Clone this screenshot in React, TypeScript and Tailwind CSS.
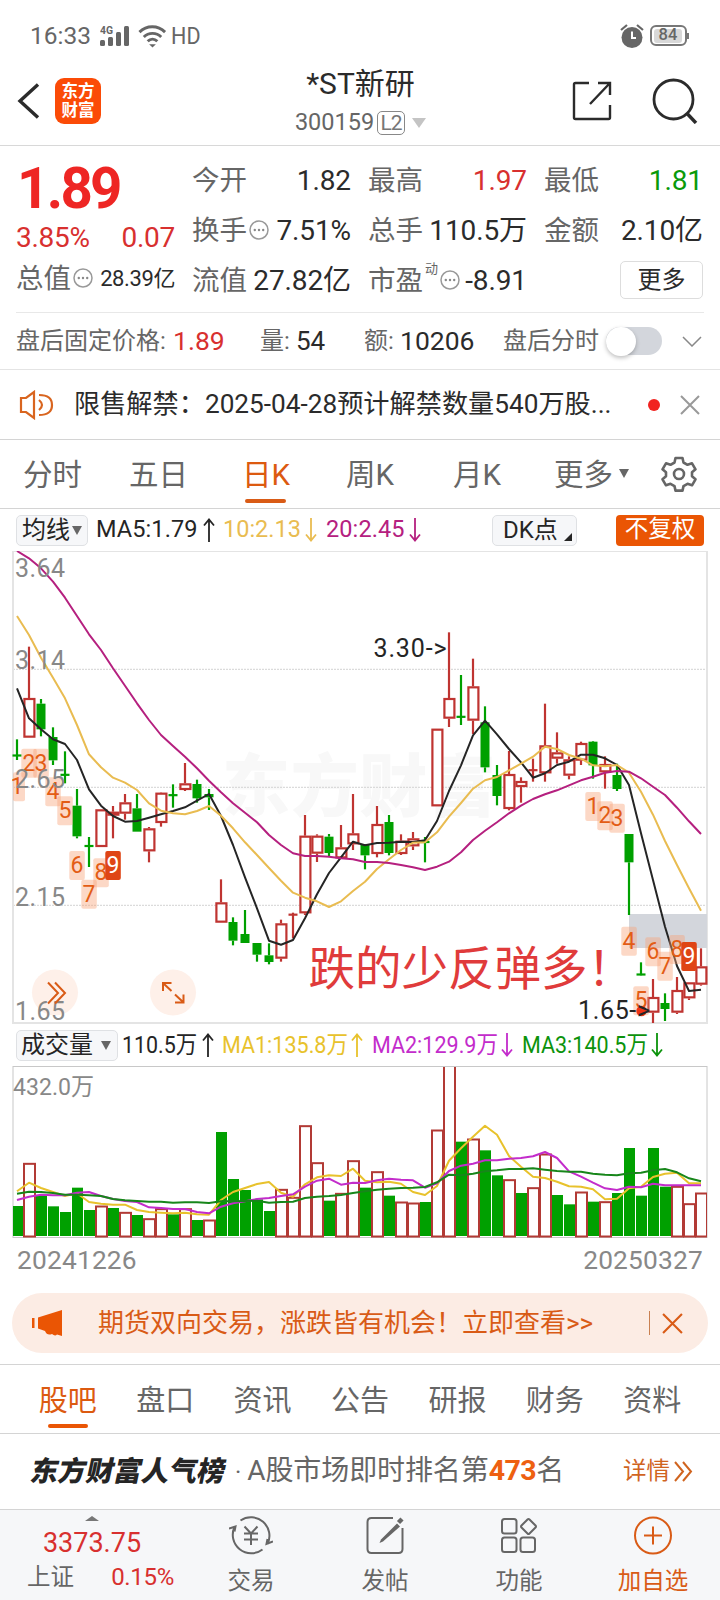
import type { ReactNode } from "react";
import clsx from "clsx";

type Candle = [up: 0 | 1, high: number, top: number, bottom: number, low: number];

// prices are stored in thirds of a pixel, measured from just above the plot
const candles: Candle[] = [
  [0, 583, 629, 634, 645], [1, 305, 459, 578, 578], [0, 462, 476, 553, 574], [0, 547, 576, 646, 660],
  [0, 619, 687, 692, 715], [0, 732, 782, 874, 880], [0, 876, 901, 905, 966], [1, 793, 793, 906, 906],
  [1, 783, 800, 812, 880], [1, 747, 772, 806, 824], [0, 747, 790, 860, 860], [1, 846, 850, 919, 952],
  [1, 742, 743, 834, 845], [0, 718, 748, 753, 788], [1, 654, 715, 735, 738], [0, 704, 717, 760, 773],
  [0, 732, 747, 757, 795], [1, 1003, 1072, 1133, 1133], [0, 1117, 1131, 1187, 1201], [0, 1095, 1167, 1194, 1194],
  [0, 1194, 1194, 1229, 1250], [0, 1195, 1231, 1251, 1258], [1, 1124, 1135, 1241, 1250], [1, 1103, 1107, 1111, 1180],
  [1, 810, 872, 1105, 1110], [1, 868, 872, 926, 951], [0, 867, 875, 924, 936], [1, 840, 907, 940, 940],
  [1, 747, 865, 898, 915], [0, 898, 898, 931, 973], [1, 783, 837, 927, 937], [0, 810, 831, 924, 931],
  [1, 868, 887, 927, 930], [1, 861, 880, 904, 915], [0, 876, 889, 893, 952], [1, 551, 551, 784, 784],
  [1, 262, 459, 521, 546], [0, 390, 513, 518, 540], [1, 341, 424, 527, 567], [0, 484, 532, 667, 682],
  [0, 660, 690, 753, 781], [1, 618, 687, 792, 796], [1, 697, 708, 726, 773], [1, 641, 673, 678, 710],
  [1, 476, 601, 685, 710], [1, 562, 622, 641, 656], [1, 634, 643, 692, 703], [1, 590, 594, 647, 660],
  [0, 588, 590, 661, 701], [1, 634, 657, 682, 731], [0, 656, 690, 732, 738], [0, 867, 867, 952, 1110],
  [0, 1252, 1286, 1291, 1291], [1, 1302, 1356, 1403, 1434], [0, 1345, 1374, 1392, 1428], [1, 1296, 1335, 1403, 1407],
  [1, 1312, 1312, 1360, 1365], [1, 1210, 1264, 1319, 1322],
];

const ma5 = [430, 520, 553, 583, 597, 645, 733, 782, 813, 830, 828, 818, 808, 798, 787, 767, 747, 813, 900, 997, 1090, 1187, 1199, 1185, 1120, 1048, 984, 937, 890, 901, 894, 893, 890, 891, 886, 828, 738, 661, 571, 527, 568, 612, 652, 698, 685, 660, 650, 629, 629, 640, 660, 720, 865, 1005, 1145, 1263, 1338, 1334];
const ma10 = [213, 270, 338, 398, 460, 540, 628, 667, 698, 713, 735, 775, 797, 805, 808, 798, 783, 812, 850, 892, 930, 969, 1007, 1043, 1058, 1069, 1086, 1069, 1038, 1010, 972, 943, 915, 893, 892, 862, 815, 774, 731, 706, 696, 676, 656, 635, 605, 612, 630, 641, 661, 664, 660, 683, 740, 809, 888, 960, 1030, 1097];
const ma20 = [18, 40, 70, 110, 158, 213, 268, 315, 370, 422, 475, 525, 570, 603, 635, 670, 707, 742, 775, 803, 832, 870, 900, 925, 933, 933, 935, 940, 943, 951, 951, 954, 960, 967, 975, 965, 950, 922, 885, 857, 832, 805, 782, 762, 748, 736, 721, 706, 695, 683, 678, 680, 700, 725, 750, 788, 829, 867];

const volumes = [558, 430, 526, 559, 576, 503, 570, 558, 564, 577, 585, 596, 566, 583, 566, 600, 600, 336, 477, 510, 538, 573, 508, 532, 317, 428, 542, 520, 422, 503, 455, 527, 546, 549, 546, 330, 100, 365, 357, 391, 466, 479, 519, 503, 402, 525, 553, 516, 545, 545, 519, 384, 527, 384, 500, 499, 551, 519];
const volumeUp = [1, 7, 9, 11, 12, 14, 16, 22, 23, 24, 25, 27, 28, 30, 32, 33, 35, 36, 38, 41, 43, 44, 47, 49, 55, 56, 57];
const vma1 = [514, 488, 504, 516, 528, 520, 546, 551, 554, 554, 570, 576, 578, 580, 578, 583, 584, 540, 516, 504, 492, 486, 518, 530, 493, 472, 466, 468, 446, 482, 487, 485, 491, 516, 525, 498, 422, 385, 350, 317, 344, 408, 440, 470, 474, 485, 499, 500, 508, 538, 536, 505, 500, 471, 461, 458, 490, 490];
const vma2 = [540, 530, 524, 526, 526, 518, 516, 528, 537, 543, 546, 562, 564, 567, 567, 576, 580, 560, 550, 544, 537, 534, 528, 523, 500, 482, 476, 494, 488, 489, 481, 476, 479, 481, 503, 490, 453, 437, 431, 421, 421, 416, 414, 409, 396, 414, 454, 470, 488, 505, 510, 500, 502, 491, 496, 496, 496, 496];
const vma3 = [521, 515, 516, 519, 524, 524, 526, 528, 537, 541, 543, 545, 545, 548, 547, 547, 549, 544, 544, 543, 542, 548, 546, 545, 534, 530, 528, 525, 519, 514, 509, 506, 504, 503, 501, 487, 464, 466, 461, 454, 451, 447, 447, 445, 449, 453, 455, 455, 461, 464, 466, 460, 458, 451, 447, 457, 475, 484];

// nine-turn marks: candle index, top, digit
const marks: [number, number, number][] = [
  [0, 682, 1], [1, 611, 2], [2, 611, 3], [3, 697, 4], [4, 754, 5], [5, 918, 6], [6, 1004, 7], [7, 940, 8], [8, 918, 9],
  [48, 741, 1], [49, 769, 2], [50, 776, 3], [51, 1145, 4], [52, 1324, 5], [53, 1177, 6], [54, 1220, 7], [55, 1170, 8], [56, 1191, 9],
];

const cx = (i: number) => 5 + i * 12;
const py = (v: number) => v / 3 - 6;
const vy = (v: number) => v / 3 - 46;
const line = (values: number[], y: (v: number) => number) =>
  values.map((v, i) => `${cx(i)},${y(v).toFixed(1)}`).join(" ");

const RED = "#bf3431";
const GREEN = "#00a000";

const KChart = () => (
  <svg width="696" height="474" viewBox="0 0 696 474" className="block" fontFamily='Roboto, "Noto Sans CJK SC", sans-serif'>
    <text x="210" y="260" fontSize="68" fontWeight="900" fill="#f8f8f8" textLength="274">东方财富</text>
    {[118.3, 236.3, 354.3].map((y) => (
      <line key={y} x1="1" x2="695" y1={y} y2={y} stroke="#d2d2d2" strokeDasharray="2 1" />
    ))}
    <rect x="1" y="0" width="694" height="472" fill="none" stroke="#e4e4e4" strokeWidth="2" />
    <rect x="617" y={py(1107)} width="78" height="34" fill="#d3d6dc" />
    <circle cx="43" cy="441.5" r="23" fill="#fef0e9" />
    <circle cx="161" cy="441.5" r="23" fill="#fef0e9" />
    {candles.map(([up, high, top, bottom, low], i) => {
      const x = cx(i);
      const color = up ? RED : GREEN;
      const thin = bottom - top < 7;
      return (
        <g key={i} stroke={color} strokeWidth="2.2">
          <line x1={x} x2={x} y1={py(high)} y2={thin ? py(low) : py(top)} />
          {!thin && <line x1={x} x2={x} y1={py(bottom)} y2={py(low)} />}
          {thin && <line x1={x - 4.5} x2={x + 4.5} y1={py((top + bottom) / 2)} y2={py((top + bottom) / 2)} />}
          {!thin && up === 0 && <rect x={x - 4.5} y={py(top)} width="9" height={(bottom - top) / 3} fill={GREEN} stroke="none" />}
          {!thin && up === 1 && (
            <rect x={x - 4.6} y={py(top) + 1} width="10" height={Math.max((bottom - top) / 3 - 2, 1)} fill="#fff" />
          )}
        </g>
      );
    })}
    <g fill="none" strokeWidth="2" strokeLinejoin="round">
      <polyline points={line(ma5, py)} stroke="#252525" />
      <polyline points={line(ma10, py)} stroke="#e9bc51" />
      <polyline points={line(ma20, py)} stroke="#b5207f" />
    </g>
    {marks.map(([i, top, n]) => {
      const left = i === 0 ? 1 : cx(i) - 7.7;
      return (
        <g key={i}>
          <rect x={left} y={py(top)} width={i === 0 ? 12 : 15.5} height="29" rx="2" fill={n === 9 ? "#df4515" : "#f9a378"} fillOpacity={n === 9 ? 1 : 0.42} />
          <text x={cx(i)} y={py(top) + 22} fontSize="23" textAnchor="middle" fill={n === 9 ? "#fff" : "#e35c15"}>{n}</text>
        </g>
      );
    })}
    <g fontSize="25" fill="#888" letterSpacing="0.4">
      <text x="3" y="25.5">3.64</text>
      <text x="3" y="117.5">3.14</text>
      <text x="3" y="236.5">2.65</text>
      <text x="3" y="354.5">2.15</text>
      <text x="3" y="468.5">1.65</text>
    </g>
    <circle cx="629.5" cy="460" r="5.2" fill="#ef3313" />
    <g fontSize="25" fill="#252525">
      <text x="361.5" y="106" textLength="73">3.30-&gt;</text>
      <text x="566" y="467.5" textLength="72">1.65-&gt;</text>
    </g>
    <text x="296.5" y="434" fontSize="46.5" fill="#e03b3b">跌的少反弹多！</text>
    <g fill="none" stroke="#d95b16" strokeWidth="2">
      <path d="M36 431.5l10 10.5-10 10.5M43 431.5l10 10.5-10 10.5" />
      <path d="M151 440v-8h8.5M151.500 432.500l8 7.500M171.500 443.500v8h-8.500M171 451l-8-7.500" />
    </g>
  </svg>
);

const VolumeChart = () => (
  <svg width="696" height="173" viewBox="0 0 696 173" className="block" fontFamily='Roboto, "Noto Sans CJK SC", sans-serif'>
    <rect x="1" y="0.5" width="694" height="171" fill="#fff" stroke="#c8c8c8" />
    <svg x="1" y="1" width="694" height="171" viewBox="1 1 694 171">
      {volumes.map((v, i) => {
        const x = cx(i);
        const y = vy(v);
        return volumeUp.includes(i) ? (
          <rect key={i} x={x - 5} y={y + 0.5} width="11" height={170 - y} fill="#fff" stroke="#b23a35" strokeWidth="2" />
        ) : (
          <rect key={i} x={x - 5} y={y} width="11" height={170 - y} fill={GREEN} />
        );
      })}
      <g fill="none" strokeWidth="2" strokeLinejoin="round">
        <polyline points={line(vma1, vy)} stroke="#e8c22c" />
        <polyline points={line(vma2, vy)} stroke="#c32ccb" />
        <polyline points={line(vma3, vy)} stroke="#17861a" />
      </g>
    </svg>
    <text x="1" y="28.5" fontSize="24" fill="#888" textLength="81" lengthAdjust="spacingAndGlyphs">432.0万</text>
  </svg>
);

const Arrow = ({ down = false }: { down?: boolean }) => (
  <svg width="12" height="24" viewBox="0 0 12 24" className="shrink-0" fill="none" stroke="currentColor" strokeWidth="1.8">
    <path d={down ? "M6 0v22.5M1 16.5l5 6 5-6" : "M6 24V1.5M1 7.5l5-6 5 6"} />
  </svg>
);

const Caret = ({ className }: { className?: string }) => (
  <svg width="10" height="9" viewBox="0 0 10 9" className={className} fill="currentColor"><path d="M0 0h10L5 9z" /></svg>
);

const Dots = () => (
  <svg width="20" height="20" viewBox="0 0 20 20" className="ml-[2px] -mt-[2px]">
    <circle cx="10" cy="10" r="9" fill="none" stroke="#999" strokeWidth="1.5" />
    <g fill="#888"><circle cx="5.8" cy="10" r="1.2" /><circle cx="10" cy="10" r="1.2" /><circle cx="14.2" cy="10" r="1.2" /></g>
  </svg>
);

const Cross = ({ className, size = 20 }: { className?: string; size?: number }) => (
  <svg width={size} height={size} viewBox="0 0 20 20" className={className} stroke="currentColor" strokeWidth="2"><path d="M1 1l18 18M19 1L1 19" /></svg>
);

interface CellProps {
  label: string;
  value?: string;
  color?: string;
  extra?: ReactNode;
}

const Cell = ({ label, value, color = "text-[#2b2b2b]", extra }: CellProps) => (
  <div className="flex h-[50px] items-center">
    <span className="-ml-[1px] text-[27.5px] text-[#666]">{label}</span>
    {extra}
    <span className={clsx("ml-auto text-[28px] tracking-[-0.1px]", color)}>{value}</span>
  </div>
);

const StatusBar = () => (
  <div className="flex h-[72px] items-center pt-[1px] pl-[30px] pr-[31px] text-[24.5px] text-[#666]">
    <span>16:33</span>
    <svg width="30" height="28" viewBox="0 0 30 28" className="ml-[9px] -mt-[5px]" fill="#666">
      <rect x="0" y="20" width="5" height="6" rx="1.5" /><rect x="8" y="17" width="5" height="9" rx="1.5" />
      <rect x="16" y="12" width="5" height="14" rx="1.5" /><rect x="24" y="6" width="5" height="20" rx="1.5" />
      <text x="0" y="14" fontSize="11" fontWeight="700" textLength="13" lengthAdjust="spacingAndGlyphs">4G</text>
    </svg>
    <svg width="29" height="24" viewBox="0 0 30 24" className="-mt-[1px] ml-[8px]" fill="none" stroke="#666" strokeWidth="3">
      <path d="M1.5 8C9 .5 20.5 .5 28 8M6 13c5-5 13-5 18 0M10 17.5c3-3 7-3 10 0" />
      <path d="M11.5 20.5h7L15 24z" fill="#666" stroke="none" />
    </svg>
    <span className="ml-[4px] w-[30px] origin-left scale-x-[0.88]">HD</span>
    <svg width="24" height="26" viewBox="0 0 24 26" className="-mt-[2px] ml-auto" fill="none" stroke="#666">
      <circle cx="12" cy="14.5" r="10.5" fill="#666" stroke="none" />
      <path d="M1 7l6-5M23 7l-6-5" strokeWidth="2.2" />
      <path d="M12 8.5v6.5h4" stroke="#fff" strokeWidth="2" />
    </svg>
    <div className="-mt-[2px] ml-[6px] flex h-[21px] w-[37px] items-center rounded-[6px] border-2 border-[#777] p-[2px]">
      <div className="flex h-[14px] w-[28px] items-center justify-center rounded-[3px] bg-[#d8d8d8] text-[16.5px] font-medium leading-none">84</div>
    </div>
    <div className="h-[6px] w-[2px] bg-[#777] -mt-[2px]" />
  </div>
);

const Header = () => (
  <div className="flex h-[74px] items-center border-b-[1.5px] border-[#d8d8d8] pl-[17px] pr-[22px]">
    <svg width="23" height="36" viewBox="0 0 23 36" className="mt-[-16px]" fill="none" stroke="#2b2b2b" strokeWidth="3.4"><path d="M21 1.5L3 18l18 16.5" /></svg>
    <div className="-mt-[16px] ml-[15px] flex h-[46px] w-[46px] flex-col items-center justify-center rounded-[9px] bg-[#fb4b07] text-[16.5px] font-bold leading-[19px] text-white">
      <span>东方</span>
      <span>财富</span>
    </div>
    <div className="-mt-[12px] ml-[152px] flex w-[215px] flex-col items-center">
      <span className="text-[30px] leading-[38px] text-[#2b2b2b] whitespace-nowrap">*ST新研</span>
      <div className="mt-[3px] flex h-[34px] items-center">
        <span className="text-[23.5px] text-[#666]">300159</span>
        <span className="ml-[3px] flex h-[24px] w-[28px] items-center justify-center rounded-[5px] border-[1.5px] border-[#888] text-[21px] tracking-[-1px] text-[#777]">L2</span>
        <svg width="14" height="10" viewBox="0 0 14 10" className="ml-[7px]"><path d="M0 0h14L7 10z" fill="#c4c4c4" /></svg>
      </div>
    </div>
    <svg width="40" height="40" viewBox="0 0 40 40" className="-mt-[16px] ml-auto" fill="none" stroke="#2b2b2b" strokeWidth="2.4">
      <path d="M17 2H3.5Q2 2 2 3.5v33Q2 38 3.5 38h33q1.5 0 1.5-1.5V24M26 2h12v12M38 2L18 23" />
    </svg>
    <svg width="46" height="46" viewBox="0 0 46 46" className="-mt-[16px] ml-[40px]" fill="none" stroke="#2b2b2b" strokeWidth="2.8">
      <circle cx="21.5" cy="21.5" r="19.5" /><path d="M35.5 36l8.5 9" strokeWidth="3.4" />
    </svg>
  </div>
);

const Quote = () => (
  <div className="grid h-[166px] grid-cols-4 gap-x-[18px] px-[17px] pt-[10px]">
    <div>
      <div className="flex h-[66px] items-center text-[56.5px] font-bold tracking-[-2.7px] text-[#ee2624]">1.89</div>
      <div className="-ml-[1px] flex h-[32px] items-center justify-between text-[28px] tracking-[-0.3px] text-[#d8302f]">
        <span>3.85%</span>
        <span>0.07</span>
      </div>
      <div className="flex h-[50px] items-center">
        <span className="-ml-[1px] text-[27.5px] text-[#666]">总值</span>
        <Dots />
        <span className="ml-auto text-[22px] tracking-[-0.4px] whitespace-nowrap text-[#2b2b2b]">28.39亿</span>
      </div>
    </div>
    <div>
      <Cell label="今开" value="1.82" />
      <Cell label="换手" value="7.51%" extra={<Dots />} />
      <Cell label="流值" value="27.82亿" />
    </div>
    <div>
      <Cell label="最高" value="1.97" color="text-[#d8302f]" />
      <Cell label="总手" value="110.5万" />
      <Cell label="市盈" value="-8.91" extra={<><span className="-mt-[26px] ml-[2px] text-[13px] text-[#666]">动</span><Dots /></>} />
    </div>
    <div>
      <Cell label="最低" value="1.81" color="text-[#0a9a0a]" />
      <Cell label="金额" value="2.10亿" />
      <div className="mt-[5px] ml-auto flex h-[38px] w-[83px] items-center justify-center rounded-[5px] border-[1.5px] border-[#ddd] text-[24px] text-[#2b2b2b]">更多</div>
    </div>
  </div>
);

const AfterHours = () => (
  <div className="mx-[16px] flex h-[57px] items-center whitespace-nowrap border-t-[1.5px] border-[#e8e8e8] text-[24px] text-[#666]">
    <span className="w-[157px]">盘后固定价格:</span>
    <span className="w-[87px] text-[26.5px] text-[#d8302f]">1.89</span>
    <span className="w-[36px]">量:</span>
    <span className="w-[68px] text-[26px] text-[#2b2b2b]">54</span>
    <span className="w-[36px]">额:</span>
    <span className="w-[103px] text-[26.5px] text-[#2b2b2b]">10206</span>
    <span className="w-[103px]">盘后分时</span>
    <div className="flex h-[28px] w-[56px] items-center rounded-full bg-[#d3d6dc]">
      <div className="h-[29px] w-[30px] rounded-full bg-white shadow-[0_2px_4px_rgba(0,0,0,0.25)]" />
    </div>
    <svg width="20" height="11" viewBox="0 0 20 11" className="ml-[20px]" fill="none" stroke="#888" strokeWidth="1.5"><path d="M1 1l9 9 9-9" /></svg>
  </div>
);

const Notice = () => (
  <div className="flex h-[71px] items-center border-y-[1.5px] border-[#e4e4e4] border-b-[#d4d4d4] pl-[19px] pr-[20px]">
    <svg width="36" height="30" viewBox="0 0 36 30" fill="none" stroke="#d9651f" strokeWidth="2.2">
      <path d="M15 2v26L7 22H2V8h5zM20 10q6 5 0 10M20 5q13 0 13 10T20 25" />
    </svg>
    <span className="ml-[19px] w-[560px] whitespace-nowrap text-[26.2px]">限售解禁：2025-04-28预计解禁数量540万股...</span>
    <span className="ml-auto size-[12px] rounded-full bg-[#f12320]" />
    <Cross className="ml-[20px] text-[#999]" />
  </div>
);

const PeriodTabs = () => (
  <div className="flex h-[69px] items-center border-b-[1.5px] border-[#d4d4d4] pl-[23px] pt-[3px] text-[29.5px] text-[#666]">
    <span className="w-[106px]">分时</span>
    <span className="w-[113px]">五日</span>
    <div className="relative flex h-full w-[104px] items-center text-[#dc5a10]">
      日K
      <span className="absolute bottom-[5px] left-[3px] h-[4px] w-[41px] rounded-full bg-[#d95b16]" />
    </div>
    <span className="w-[107px]">周K</span>
    <span className="w-[101px]">月K</span>
    <span>更多</span>
    <Caret className="ml-[6px] -mt-[4px]" />
    <svg width="36" height="36" viewBox="0 0 36 36" className="-mt-[4px] ml-[32px]" fill="none" stroke="#666" strokeWidth="2.6" strokeLinejoin="round">
      <path d="M14.5 2h7l1 4.5 4 2.300 4.500-1.500 3.500 6-3.500 3v4l3.500 3-3.500 6-4.500-1.500-4 2.300-1 4.500h-7l-1-4.500-4-2.300L5 29.300l-3.500-6 3.500-3v-4l-3.500-3 3.500-6 4.500 1.500 4-2.300z" />
      <circle cx="18" cy="18" r="5" />
    </svg>
  </div>
);

const MaBar = () => (
  <div className="flex h-[42px] items-center whitespace-nowrap pl-[16px] pr-[16px] text-[23.5px] text-[#252525]">
    <div className="flex h-[31px] w-[72px] items-center justify-center rounded-[5px] border border-[#dfe1e4] bg-[#f6f7f9] text-[24px]">
      均线
      <Caret className="ml-[2px] text-[#666]" />
    </div>
    <span className="ml-[8px] w-[107px] tracking-[0.1px]">MA5:1.79</span>
    <Arrow />
    <span className="ml-[8px] w-[82px] text-[#e9bc51]">10:2.13</span>
    <span className="text-[#e9bc51]"><Arrow down /></span>
    <span className="ml-[9px] w-[83px] tracking-[0.1px] text-[#b5207f]">20:2.45</span>
    <span className="text-[#b5207f]"><Arrow down /></span>
    <div className="ml-auto flex h-[31px] w-[85px] items-center rounded-[5px] border border-[#dfe1e4] bg-[#f6f7f9] pl-[10px] text-[24px]">
      <span className="w-[61px]">DK点</span>
      <svg width="8" height="8" viewBox="0 0 8 8" className="mt-[14px]"><path d="M8 0v8H0z" fill="#252525" /></svg>
    </div>
    <div className="ml-[39px] flex h-[31px] w-[88px] items-center justify-center rounded-[4px] bg-[#ea5504] text-[23.5px] text-white">不复权</div>
  </div>
);

const VolumeItem = ({ text, className, down }: { text: string; className: string; down?: boolean }) => (
  <div className={clsx("flex items-center", className)}>
    <span className="min-w-0 flex-1"><span className="inline-block origin-left scale-x-[0.89]">{text}</span></span>
    <Arrow down={down} />
  </div>
);

const VolumeBar = () => (
  <div className="flex h-[41px] items-center whitespace-nowrap pl-[16px] pb-[1px] text-[24.2px] text-[#252525]">
    <div className="flex h-[31px] w-[102px] shrink-0 items-center rounded-[5px] border border-[#dfe1e4] bg-[#f6f7f9] pl-[4px] text-[24px]">
      成交量
      <Caret className="ml-[8px] text-[#666]" />
    </div>
    <div className="ml-[4px] flex w-[92px] items-center">
      <span className="min-w-0 flex-1"><span className="inline-block origin-left scale-x-[0.885]">110.5万</span></span>
      <Arrow />
    </div>
    <VolumeItem text="MA1:135.8万" className="ml-[8px] w-[141px] text-[#e8c22c]" />
    <VolumeItem text="MA2:129.9万" className="ml-[9px] w-[141px] text-[#c32ccb]" down />
    <VolumeItem text="MA3:140.5万" className="ml-[9px] w-[141px] text-[#0c930c]" down />
  </div>
);

const Banner = () => (
  <div className="mx-[12px] mt-[13px] flex h-[60px] items-center rounded-full bg-[#fcece4] pl-[20px] pr-[25px] text-[#d95b16]">
    <svg width="31" height="26" viewBox="0 0 31 26" fill="#ea5504">
      <path d="M0 8h2.500v10H0zM6 7.500L30 0v26l-5-1.500q-2 2-5-.500-5 2-7-3L6 18.500z" />
    </svg>
    <span className="ml-[35px] whitespace-nowrap text-[26px]">期货双向交易，涨跌皆有机会！立即查看&gt;&gt;</span>
    <span className="ml-auto h-[24px] w-[1.5px] bg-[#c98051]" />
    <Cross className="ml-[12px]" size={21} />
  </div>
);

const tabs = ["股吧", "盘口", "资讯", "公告", "研报", "财务", "资料"];

const InfoTabs = () => (
  <div className="mt-[11px] flex h-[70px] border-y-[1.5px] border-[#d4d4d4] pl-[19px] pr-[19px] text-[29px] text-[#666]">
    {tabs.map((tab, i) => (
      <div key={tab} className={clsx("relative flex flex-1 items-center justify-center pt-[4px]", i === 0 && "text-[#dc5a10]")}>
        {tab}
        {i === 0 && <span className="absolute bottom-[5px] h-[4px] w-[40px] rounded-full bg-[#ea5504]" />}
      </div>
    ))}
  </div>
);

const RankRow = () => (
  <div className="flex h-[75px] items-center whitespace-nowrap pl-[31px] pr-[27px] text-[28px] text-[#666]">
    <span className="w-[204px] origin-left -skew-x-12 text-[27.8px] font-black text-[#252525]">东方财富人气榜</span>
    <span className="text-[24px]">·</span>
    <span className="ml-[6px] tracking-[-0.1px]">A股市场即时排名第<b className="text-[28.500px] tracking-[-0.5px] text-[#ee6010]">473</b>名</span>
    <span className="ml-auto text-[23.5px] text-[#d0641f]">详情</span>
    <svg width="19" height="21" viewBox="0 0 19 21" className="ml-[4px]" fill="none" stroke="#d0641f" strokeWidth="2"><path d="M1 1l8 9.500L1 20M9 1l8 9.500L9 20" /></svg>
  </div>
);

const NavItem = ({ label, className, children }: { label: string; className?: string; children: ReactNode }) => (
  <div className={clsx("flex flex-1 flex-col items-center pt-[5px]", className)}>
    <svg width="44" height="40" viewBox="0 0 44 40" fill="none" stroke="currentColor" strokeWidth="2">{children}</svg>
    <span className="mt-[8px] text-[23.5px] leading-[36px]">{label}</span>
  </div>
);

const BottomBar = () => (
  <div className="flex h-[93px] border-t-[1.5px] border-[#d4d4d4] bg-[#f6f7f9] text-[#666]">
    <div className="flex w-[184px] flex-col items-center">
      <svg width="14" height="5" viewBox="0 0 14 5" className="mt-[6px]"><path d="M7 0l7 5H0z" fill="#777" /></svg>
      <span className="mt-[5px] text-[27px] leading-[34px] text-[#d8302f]">3373.75</span>
      <div className="flex w-full items-center justify-between pl-[27px] pr-[10px] text-[23.5px] leading-[34px]">
        <span>上证</span>
        <span className="text-[24px] tracking-[-0.3px] text-[#d8302f]">0.15%</span>
      </div>
    </div>
    <NavItem label="交易">
      <path d="M11.500 5.500A18.500 18.500 0 0 1 38.500 29M33.500 34.500A18.500 18.500 0 0 1 5.500 12M0 13.500l6.500-2-1 5M44 26.500l-6.500 2.500 1-5" />
      <path d="M15.500 11.500l6.500 7 6.500-7M22 18.500v11.500M15 18.500h14M15 24.500h14" />
    </NavItem>
    <NavItem label="发帖">
      <path d="M30 3H8.500Q4.500 3 4.500 7v27q0 4 4 4h27q4 0 4-4V13" />
      <path d="M34 8.500l3 3L20 26.500l-3.500 1.500 1.500-3.500z" fill="currentColor" stroke="none" />
      <path d="M39 4l-3.500 3.500" strokeWidth="4.500" />
    </NavItem>
    <NavItem label="功能">
      <rect x="5" y="4" width="14.5" height="14.500" rx="2.500" /><path d="M30.500 4.500q1-1 2 0l6 6q1 1 0 2l-6 6q-1 1-2 0l-6-6q-1-1 0-2z" />
      <rect x="5" y="22.500" width="14.500" height="14.500" rx="2.500" /><rect x="23.500" y="22.500" width="14.500" height="14.500" rx="2.500" />
    </NavItem>
    <NavItem label="加自选" className="text-[#d95b16]">
      <circle cx="22" cy="20.500" r="18" /><path d="M22 11.500v18M13 20.500h18" />
    </NavItem>
  </div>
);

export default function App() {
  return (
    <div className='flex h-[1600px] w-[720px] flex-col overflow-hidden bg-white font-[Roboto,"Noto_Sans_CJK_SC",sans-serif] leading-none text-[#2b2b2b] [&>*]:shrink-0'>
      <StatusBar />
      <Header />
      <Quote />
      <AfterHours />
      <Notice />
      <PeriodTabs />
      <MaBar />
      <div className="ml-[12px]"><KChart /></div>
      <VolumeBar />
      <div className="ml-[12px]"><VolumeChart /></div>
      <div className="flex h-[41px] items-center justify-between px-[17px] pt-[1px] text-[26.3px] tracking-[0.2px] text-[#888]">
        <span>20241226</span>
        <span>20250327</span>
      </div>
      <Banner />
      <InfoTabs />
      <RankRow />
      <BottomBar />
    </div>
  );
}
